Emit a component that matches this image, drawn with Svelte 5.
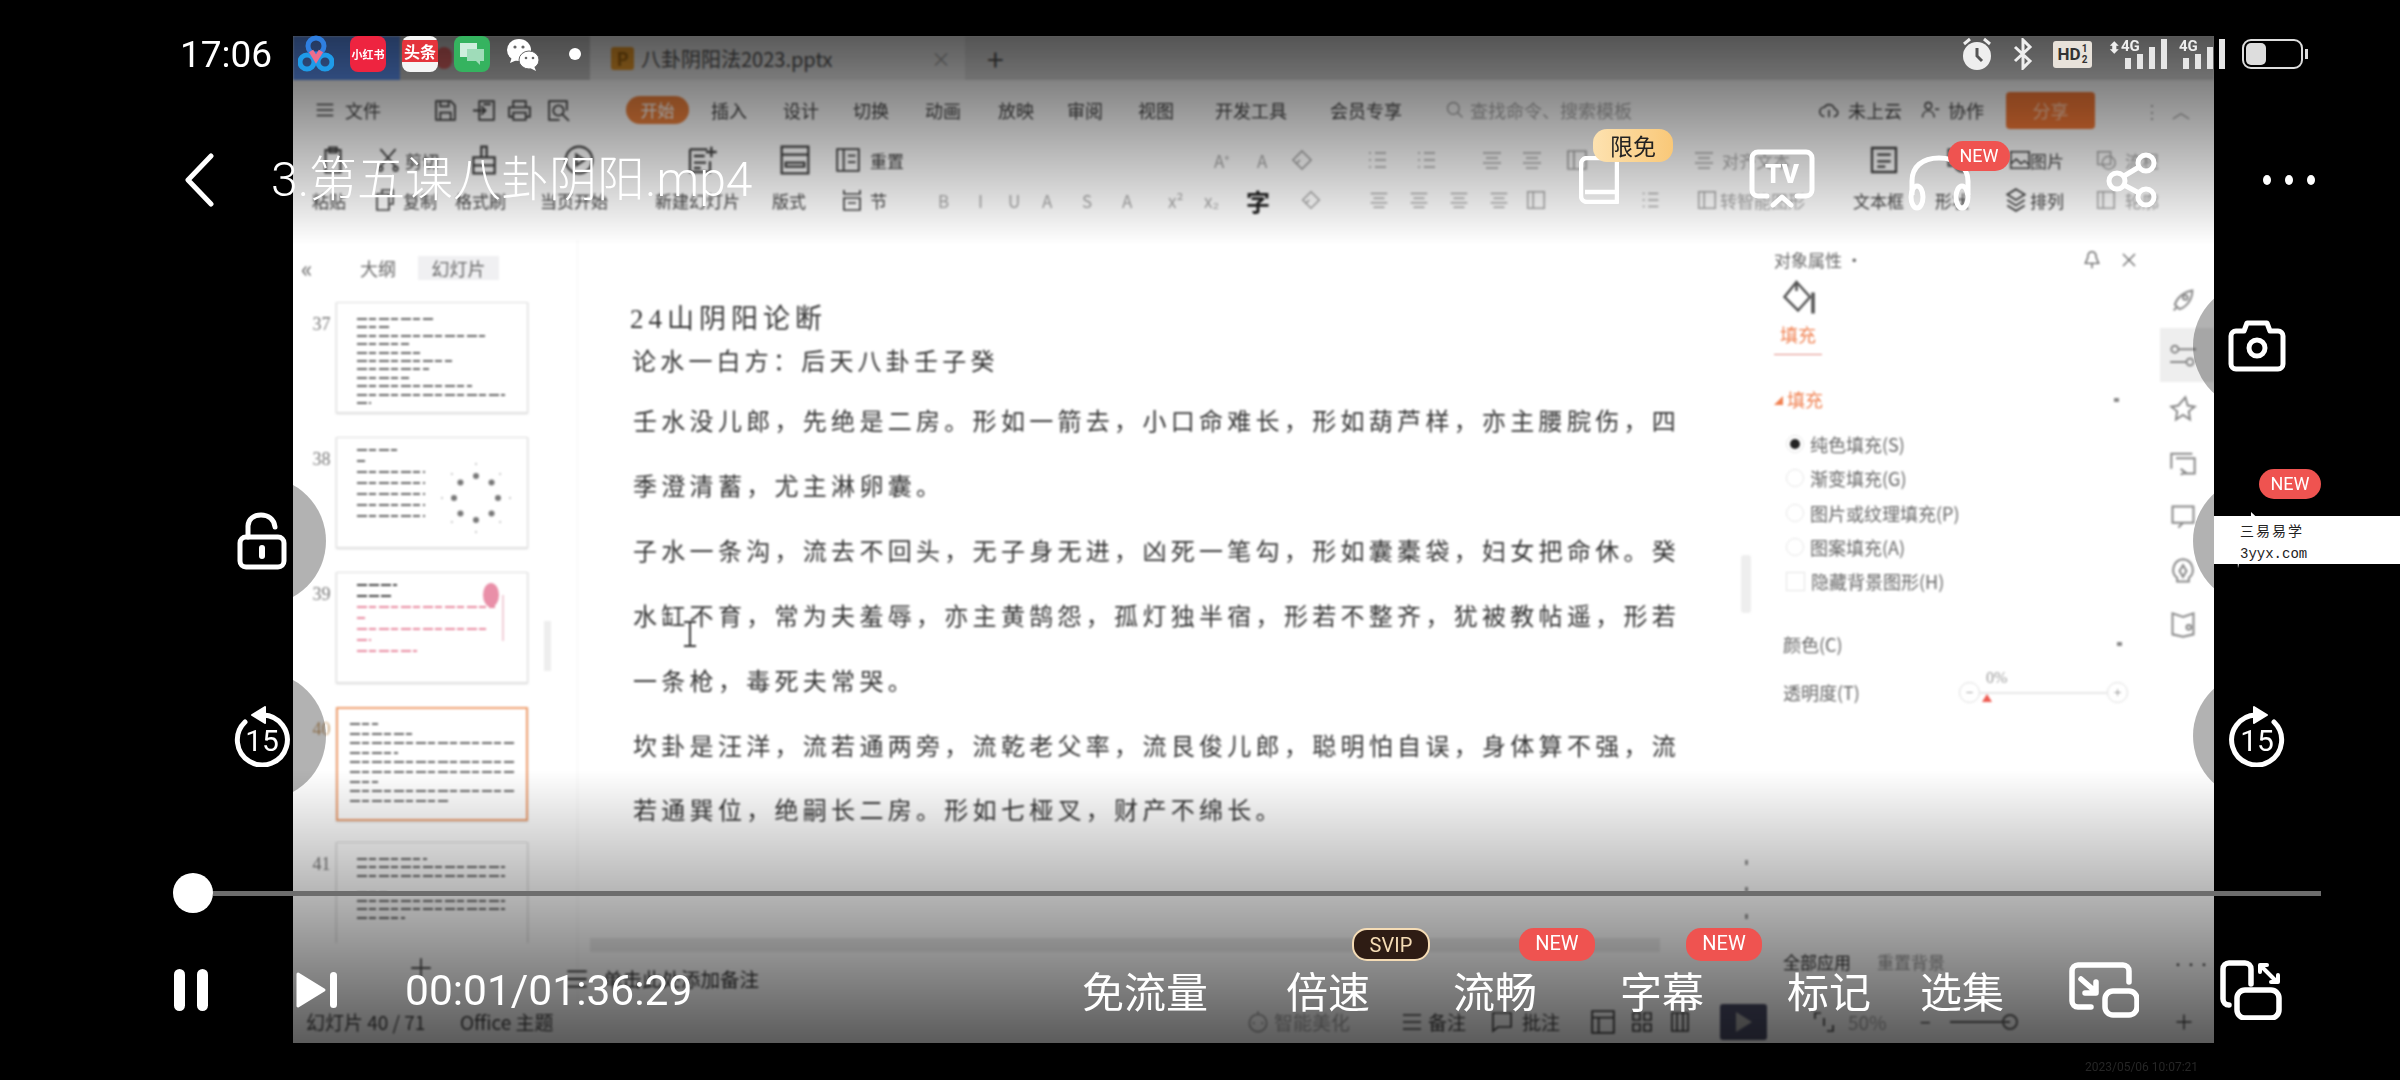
<script>
  const place = (items, end) => items.map((it, i) => ({ ...it, w: (items[i + 1] ? items[i + 1].x : end) - it.x }));

  const ICONS = {
    menu: '<path d="M3 6h18M3 12h18M3 18h18"/>',
    save: '<path d="M3 3h14l4 4v14H3zM7 21v-7h10v7M7 3v5h8V3"/>',
    import: '<path d="M7 3h14v18H7zM1 12h12M9 8l4 4-4 4M11 6h7"/>',
    print: '<path d="M6 9V3h12v6M6 18H2V9h20v9h-4M6 14h12v7H6z"/>',
    preview: '<path d="M20 12V3H3v18h10"/><circle cx="12" cy="12" r="5"/><path d="M16 16l6 6"/>',
    clip: '<path d="M6 4h12v18H6zM9 2h6v4H9z"/>',
    scissors: '<path d="M5 2l14 16M19 2L5 18"/><circle cx="5" cy="20" r="2"/><circle cx="19" cy="20" r="2"/>',
    brush: '<path d="M10 2h4v8h-4zM4 10h16v12H4zM4 16h16"/>',
    play: '<circle cx="12" cy="12" r="10"/><path d="M10 8l6 4-6 4z"/>',
    newslide: '<path d="M3 4h13M3 4v17h15v-8M6 9h8M6 14h9M6 18h5M19 2v8M15 6h8"/>',
    layout: '<path d="M2 2h20v20H2zM2 8h20M5 14h14v3H5z"/>',
    reset: '<path d="M2 2h20v20H2zM8 2v20M12 8h7M12 14h7"/>',
    copy: '<path d="M4 6h12v16H4zM9 6V2h11v14h-4"/>',
    section: '<path d="M4 2v4h16V2M4 10v12h16V10zM8 15h8"/>',
    list: '<path d="M3 5h2M3 12h2M3 19h2M9 5h11M9 12h11M9 19h11"/>',
    align: '<path d="M3 5h18M6 10h12M3 15h18M6 20h12"/>',
    eraser: '<path d="M12 3l9 9-9 9-9-9z"/><path d="M6 16l4-4"/>',
    box: '<path d="M3 3h18v18H3zM9 3v18"/>',
    text: '<path d="M3 3h18v18H3z"/><path d="M7 8h10M7 13h10M7 17h6"/>',
    shape: '<path d="M3 3h14v14H3z"/><circle cx="15" cy="15" r="7"/>',
    image: '<path d="M2 3h20v18H2zM2 16l6-5 5 5 4-3 5 4"/>',
    arrange: '<path d="M12 2l8 5-8 5-8-5zM4 12l8 5 8-5M4 17l8 5 8-5"/>',
    cloud: '<path d="M7 19a5 5 0 0 1 0-10 6 6 0 0 1 11 2 4 4 0 0 1-1 8"/><path d="M12 12v8"/>',
    person: '<circle cx="10" cy="7" r="4"/><path d="M3 21c0-5 3-8 7-8s7 3 7 8M18 11h5"/>',
    search: '<circle cx="10" cy="10" r="7"/><path d="M15 15l6 6"/>',
    robot: '<circle cx="12" cy="13" r="8"/><path d="M12 2v3M8 12v2M16 12v2"/>',
    notes: '<path d="M3 5h18M3 12h18M3 19h18"/>',
    comment: '<path d="M3 3h18v14H8l-5 4z"/>',
    normal: '<path d="M2 2h20v20H2zM2 8h20M8 8v14"/>',
    sorter: '<path d="M3 3h7v7H3zM14 3h7v7h-7zM3 14h7v7H3zM14 14h7v7h-7z"/>',
    read: '<path d="M4 3h16v18H4zM9 3v18M15 3v18"/>',
    fit: '<path d="M3 9V3h6M21 15v6h-6M12 8v8"/>',
    fill: '<path d="M11 2l9 10-8 9-9-9zM11 2v6"/><path d="M22 9v14" stroke-width="2.4"/>',
    pin: '<path d="M12 2c4 0 5 3 5 7l3 7H4l3-7c0-4 1-7 5-7zM12 16v6"/>',
    close: '<path d="M4 4l16 16M20 4L4 20"/>',
    rocket: '<path d="M20 3c0 8-5 14-11 16l-4-4C7 9 13 4 20 3z"/><circle cx="14" cy="9" r="2"/><path d="M4 20l3-3"/>',
    sliders: '<circle cx="5" cy="7" r="3"/><path d="M8 7h15M1 18h14"/><circle cx="18" cy="18" r="3"/>',
    star: '<path d="M14 2l2 7 6 1-5 4 1 7-6-4-6 4 1-7-5-4 6-1z"/>',
    turn: '<path d="M2 17V4h18M6 8h16v13H12M10 17l4 3-4 2"/>',
    chat: '<path d="M3 3h18v14H3zM8 21l4-4"/>',
    bulb: '<path d="M12 2a9 9 0 0 1 5 16v3H7v-3A9 9 0 0 1 12 2z"/><path d="M12 7l-3 5 3 5 3-5z"/>',
    booklet: '<path d="M12 5L3 2v18l9 2 9-2V2z"/><circle cx="17" cy="14" r="2"/>',
    plus: '<path d="M12 3v18M3 12h18"/>'
  };

  const menu = place([
    { x: 293 }, { x: 314, i: 'menu', s: 22 }, { x: 345, t: '文件' }, { x: 433, i: 'save', s: 25 }, { x: 472, i: 'import', s: 25 },
    { x: 507, i: 'print', s: 25 }, { x: 546, i: 'preview', s: 25 }, { x: 626, pill: '开始' }, { x: 711, t: '插入' }, { x: 783, t: '设计' },
    { x: 853, t: '切换' }, { x: 925, t: '动画' }, { x: 998, t: '放映' }, { x: 1067, t: '审阅' }, { x: 1138, t: '视图' },
    { x: 1215, t: '开发工具' }, { x: 1330, t: '会员专享' }, { x: 1445, i: 'search', s: 20, m: 1 }, { x: 1470, t: '查找命令、搜索模板', m: 1 },
    { x: 1818, i: 'cloud', s: 22 }, { x: 1848, t: '未上云' }, { x: 1920, i: 'person', s: 20 }, { x: 1948, t: '协作' },
    { x: 2006, share: '分享' }, { x: 2143, t: '⋮', m: 1 }, { x: 2172, t: '︿', m: 1 }
  ], 2214);

  const ribbonTop = place([
    { x: 293 }, { x: 318, i: 'clip', s: 30 }, { x: 375, i: 'scissors', s: 26 }, { x: 405, t: '剪切' }, { x: 468, i: 'brush', s: 32 },
    { x: 563, i: 'play', s: 32 }, { x: 686, i: 'newslide', s: 32 }, { x: 779, i: 'layout', s: 32 }, { x: 835, i: 'reset', s: 26 }, { x: 870, t: '重置' },
    { x: 1214, t: 'A⁺', m: 1 }, { x: 1257, t: 'A', m: 1 }, { x: 1290, i: 'eraser', s: 24, m: 1 }, { x: 1366, i: 'list', s: 24, m: 1 }, { x: 1415, i: 'list', s: 24, m: 1 },
    { x: 1480, i: 'align', s: 24, m: 1 }, { x: 1520, i: 'align', s: 24, m: 1 }, { x: 1565, i: 'box', s: 24, m: 1 }, { x: 1692, i: 'align', s: 24, m: 1 },
    { x: 1722, t: '对齐文本', m: 1 }, { x: 1868, i: 'text', s: 32 }, { x: 1945, i: 'shape', s: 28 }, { x: 2009, i: 'image', s: 22 }, { x: 2030, t: '图片' },
    { x: 2095, i: 'shape', s: 22, m: 1 }, { x: 2125, t: '流程', m: 1 }
  ], 2214);

  const ribbonBottom = place([
    { x: 293 }, { x: 312, t: '粘贴' }, { x: 373, i: 'copy', s: 24 }, { x: 403, t: '复制' }, { x: 455, t: '格式刷' }, { x: 540, t: '当页开始' },
    { x: 655, t: '新建幻灯片' }, { x: 772, t: '版式' }, { x: 840, i: 'section', s: 24 }, { x: 870, t: '节' },
    { x: 938, t: 'B', m: 1 }, { x: 978, t: 'I', m: 1 }, { x: 1008, t: 'U', m: 1 }, { x: 1042, t: 'A', m: 1 }, { x: 1082, t: 'S', m: 1 }, { x: 1122, t: 'A', m: 1 },
    { x: 1168, t: 'x²', m: 1 }, { x: 1204, t: 'x₂', m: 1 }, { x: 1246, t: '字', d: 1 }, { x: 1300, i: 'eraser', s: 22, m: 1 },
    { x: 1368, i: 'align', s: 22, m: 1 }, { x: 1408, i: 'align', s: 22, m: 1 }, { x: 1448, i: 'align', s: 22, m: 1 }, { x: 1488, i: 'align', s: 22, m: 1 }, { x: 1525, i: 'box', s: 22, m: 1 },
    { x: 1640, i: 'list', s: 22, m: 1 }, { x: 1696, i: 'box', s: 22, m: 1 }, { x: 1720, t: '转智能图形', m: 1 }, { x: 1853, t: '文本框' }, { x: 1935, t: '形状' },
    { x: 2003, i: 'arrange', s: 26 }, { x: 2030, t: '排列' }, { x: 2095, i: 'box', s: 22, m: 1 }, { x: 2125, t: '轮廓', m: 1 }
  ], 2214);

  const footer = place([
    { x: 293 }, { x: 306, t: '幻灯片 40 / 71' }, { x: 460, t: 'Office 主题' }, { x: 1245, i: 'robot', s: 26, m: 1 }, { x: 1274, t: '智能美化', m: 1 }, { x: 1400, i: 'notes', s: 24 },
    { x: 1428, t: '备注' }, { x: 1490, i: 'comment', s: 24 }, { x: 1522, t: '批注' }, { x: 1590, i: 'normal', s: 26 }, { x: 1630, i: 'sorter', s: 24 },
    { x: 1668, i: 'read', s: 24 }, { x: 1720, playBtn: 1 }, { x: 1812, i: 'fit', s: 24 }, { x: 1848, t: '50%', m: 1 }, { x: 1920, t: '−' }, { x: 1950, zoomBar: 1 },
    { x: 2174, i: 'plus', s: 20 }
  ], 2214);

  const lines = [
    '壬水没儿郎，先绝是二房。形如一箭去，小口命难长，形如葫芦样，亦主腰脘伤，四',
    '季澄清蓄，尤主淋卵囊。',
    '子水一条沟，流去不回头，无子身无进，凶死一笔勾，形如囊橐袋，妇女把命休。癸',
    '水缸不育，常为夫羞辱，亦主黄鹄怨，孤灯独半宿，形若不整齐，犹被教帖遥，形若',
    '一条枪，毒死夫常哭。',
    '坎卦是汪洋，流若通两旁，流乾老父率，流艮俊儿郎，聪明怕自误，身体算不强，流',
    '若通巽位，绝嗣长二房。形如七桠叉，财产不绵长。'
  ];

  const slides = [
    { n: 37, cls: 'plain', lines: [78, 33, 128, 52, 65, 95, 72, 52, 115, 148, 14] },
    { n: 38, cls: 'wheel', lines: [40, 8, 68, 68, 68, 68, 68] },
    { n: 39, cls: 'pink', lines: [40, 36, 138, 8, 132, 14, 60] },
    { n: 40, cls: 'active', lines: [28, 62, 166, 48, 166, 166, 28, 166, 100] },
    { n: 41, cls: 'plain wide', lines: [70, 148, 148, 0, 30, 148, 148, 48] }
  ];

  const options = [
    { t: '纯色填充(S)', on: true }, { t: '渐变填充(G)' }, { t: '图片或纹理填充(P)' }, { t: '图案填充(A)' }
  ];

  const rail = ['rocket', 'sliders', 'star', 'turn', 'chat', 'bulb', 'booklet'];
  const wheel = [0, 45, 90, 135, 180, 225, 270, 315];
</script>

{#snippet ic(name, size)}
  <svg class="ic" width={size} height={size} viewBox="0 0 24 24">{@html ICONS[name]}</svg>
{/snippet}

{#snippet cells(items)}
  {#each items as it}
    <div class="cell" class:muted={it.m} class:dark={it.d} style="width:{it.w}px">
      {#if it.i}{@render ic(it.i, it.s)}{/if}
      {#if it.t}<span>{it.t}</span>{/if}
      {#if it.pill}<span class="pill">{it.pill}</span>{/if}
      {#if it.share}<span class="sharebtn">{it.share}</span>{/if}
      {#if it.playBtn}<span class="playbtn"><i></i></span>{/if}
      {#if it.zoomBar}<span class="zoombar"><i></i></span>{/if}
    </div>
  {/each}
{/snippet}

{#snippet replay()}
  <svg width="56" height="62" viewBox="0 0 56 62">
    <path d="M27 10 A25 25 0 1 0 45 17" fill="none" stroke="#fff" stroke-width="5" stroke-linecap="round" />
    <path d="M25 2 L38 10 L25 18 Z" fill="#fff" stroke="#fff" stroke-width="2" stroke-linejoin="round" />
    <text x="28" y="46" text-anchor="middle" class="num15">15</text>
  </svg>
{/snippet}

<div class="screen">
  <main class="video">
    <div class="app">
      <header class="tabs">
        <div class="tab-home"></div>
        <div class="tab-other"><i></i></div>
        <div class="tab-active">
          <b class="ppt">P</b>
          <span>八卦阴阳法2023.pptx</span>
          <em>×</em>
        </div>
        <span class="tab-add">+</span>
      </header>
      <nav class="row menu">{@render cells(menu)}</nav>
      <section class="ribbon">
        <div class="row rib">{@render cells(ribbonTop)}</div>
        <div class="row rib">{@render cells(ribbonBottom)}</div>
      </section>

      <div class="workspace">
        <aside class="outline">
          <div class="out-head">
            <span class="collapse">«</span>
            <span class="out-tab">大纲</span>
            <span class="out-tab on">幻灯片</span>
          </div>
          <div class="thumbs">
            {#each slides as s}
              <div class="thumb-row">
                <span class="num" class:cur={s.n === 40}>{s.n}</span>
                <div class="thumb {s.cls}">
                  {#each s.lines as w}
                    <div class="tl" style="width:{w}px"></div>
                  {/each}
                  {#if s.cls === 'wheel'}
                    <svg class="wheel-art" width="80" height="80" viewBox="-40 -40 80 80">
                      {#each wheel as a}
                        <circle cx={Math.cos(a * Math.PI / 180) * 22} cy={Math.sin(a * Math.PI / 180) * 22} r="3" fill="#777" />
                        <circle cx={Math.cos(a * Math.PI / 180) * 34} cy={Math.sin(a * Math.PI / 180) * 34} r="1" fill="#bbb" />
                      {/each}
                    </svg>
                  {/if}
                  {#if s.cls === 'pink'}
                    <svg class="balloon" width="32" height="60" viewBox="0 0 32 60">
                      <ellipse cx="10" cy="14" rx="8" ry="12" fill="#e98fa8" />
                      <path d="M22 14v46" stroke="#eebfca" stroke-width="1.5" />
                    </svg>
                  {/if}
                </div>
              </div>
            {/each}
          </div>
          <div class="add-slide">{@render ic('plus', 26)}</div>
          <span class="out-scroll"></span>
        </aside>

        <section class="center">
          <article class="slide">
            <h1>24山阴阳论断</h1>
            <h2>论水一白方：后天八卦壬子癸</h2>
            {#each lines as l}<p>{l}</p>{/each}
            <svg class="cursor" width="14" height="26" viewBox="0 0 14 26"><path d="M1 1h12M7 1v24M1 25h12" fill="none" stroke="#333" stroke-width="2" /></svg>
          </article>
          <div class="notes">
            <div class="note-bar"></div>
            <div class="note-text">{@render ic('notes', 26)}<span>单击此处添加备注</span></div>
          </div>
          <span class="main-scroll"></span>
          <span class="vdots"><i></i><i></i><i></i></span>
        </section>

        <section class="props">
          <div class="p-head">
            <span>对象属性 ·</span>
            <span class="p-actions">{@render ic('pin', 20)}{@render ic('close', 18)}</span>
          </div>
          <div class="p-fill">{@render ic('fill', 36)}</div>
          <div class="p-tab"><span>填充</span></div>
          <div class="p-sec"><span><small>◢</small> 填充</span><i></i></div>
          <ul class="opts">
            {#each options as o}
              <li><span class="radio" class:on={o.on}></span>{o.t}</li>
            {/each}
            <li><span class="check"></span>隐藏背景图形(H)</li>
          </ul>
          <div class="p-color"><span>颜色(C)</span><i></i></div>
          <div class="p-alpha">
            <span class="a-label">透明度(T)</span>
            <span class="round">−</span>
            <span class="a-track"><em>0%</em><b></b></span>
            <span class="round">+</span>
          </div>
          <div class="p-foot"><span>全部应用</span><span class="light">重置背景</span></div>
        </section>

        <aside class="rail">
          {#each rail as r, i}
            <div class="rail-item" class:sel={i === 1}>{@render ic(r, 28)}</div>
          {/each}
          <div class="rail-more">•••</div>
        </aside>
      </div>

      <footer class="row foot">{@render cells(footer)}</footer>
    </div>
    <div class="shade top"></div>
    <div class="shade bottom"></div>
  </main>

  <div class="player">
    <div class="status">
      <span class="clock">17:06</span>
      <div class="notifs">
        <svg width="36" height="38" viewBox="0 0 36 38" fill="none" stroke-width="5">
          <circle cx="9" cy="27" r="7" stroke="#1f9be8" /><circle cx="27" cy="27" r="7" stroke="#1f9be8" />
          <circle cx="18" cy="11" r="8" stroke="#2f7fe0" /><path d="M13 16l5 8 5-8" stroke="#ec6d8c" />
        </svg>
        <span class="xhs">小红书</span>
        <span class="tt"><b>头条</b></span>
        <span class="msg">
          <svg width="30" height="28" viewBox="0 0 30 28"><path d="M3 3h17v14H3z" fill="#cfeedd" /><path d="M10 9h17v12h-4v4l-4-4h-9z" fill="#9fdcb9" /></svg>
        </span>
        <svg width="34" height="34" viewBox="0 0 34 34" fill="#fff">
          <ellipse cx="13" cy="13" rx="12" ry="11" /><path d="M6 20l-2 6 7-3z" />
          <ellipse cx="23" cy="23" rx="10" ry="9" stroke="#666" stroke-width="1" /><path d="M28 29l2 5-6-3z" />
          <circle cx="9" cy="10" r="1.6" fill="#666" /><circle cx="17" cy="10" r="1.6" fill="#666" />
          <circle cx="20" cy="21" r="1.3" fill="#666" /><circle cx="27" cy="21" r="1.3" fill="#666" />
        </svg>
        <span class="ndot"></span>
      </div>
      <div class="sys">
        <svg width="34" height="34" viewBox="0 0 34 34">
          <circle cx="17" cy="19" r="14" fill="#eee" /><path d="M17 11v8l5 5" fill="none" stroke="#555" stroke-width="3" />
          <path d="M4 7l6-5M30 7l-6-5" stroke="#eee" stroke-width="3" />
        </svg>
        <svg class="bt" width="20" height="32" viewBox="0 0 20 32"><path d="M2 9l15 14-7 7V2l7 7L2 23" fill="none" stroke="#eee" stroke-width="3" /></svg>
        <span class="hd"><b>HD</b><small><i>1</i><i>2</i></small></span>
        <span class="sig first"><em>⬍</em><u>4G</u><i class="b1"></i><i class="b2"></i><i class="b3"></i><i class="b4"></i></span>
        <span class="sig"><u>4G</u><i class="b1"></i><i class="b2"></i><i class="b3"></i><i class="b4"></i></span>
        <span class="batt"><i></i></span>
      </div>
    </div>

    <div class="titlebar">
      <svg class="back" width="30" height="54" viewBox="0 0 30 54"><path d="M27 3L4 27l23 24" fill="none" stroke="#fff" stroke-width="5" stroke-linecap="round" stroke-linejoin="round" /></svg>
      <h3>3.第五课八卦阴阳.mp4</h3>
      <div class="tools">
        <span class="tool book">
          <svg width="40" height="48" viewBox="0 0 40 48" fill="none" stroke="#fff" stroke-width="4.5" stroke-linejoin="round"><path d="M8 2h30v44H8a6 6 0 0 1-6-6V8a6 6 0 0 1 6-6z" /><path d="M6 36h32" /></svg>
          <b class="free">限免</b>
        </span>
        <span class="tool tv">
          <svg width="66" height="60" viewBox="0 0 66 60" fill="none" stroke="#fff" stroke-width="5" stroke-linecap="round" stroke-linejoin="round">
            <path d="M18 47H9a6 6 0 0 1-6-6V9a6 6 0 0 1 6-6h48a6 6 0 0 1 6 6v32a6 6 0 0 1-6 6h-9" />
            <path d="M24 56l9-8 9 8" />
            <text x="33" y="34" text-anchor="middle" class="tvtxt">TV</text>
          </svg>
        </span>
        <span class="tool head">
          <svg width="64" height="56" viewBox="0 0 64 56" fill="none" stroke="#fff" stroke-width="5">
            <path d="M4 40V26C4 12 14 3 31 3s29 9 29 23v14" />
            <ellipse cx="9" cy="42" rx="6" ry="11" /><ellipse cx="54" cy="42" rx="6" ry="11" />
          </svg>
          <b class="new">NEW</b>
        </span>
        <span class="tool share">
          <svg width="52" height="56" viewBox="0 0 52 56" fill="none" stroke="#fff" stroke-width="5">
            <circle cx="40" cy="11" r="8" /><circle cx="11" cy="29" r="8" /><circle cx="40" cy="45" r="8" />
            <path d="M18 24l15-9M18 33l15 8" />
          </svg>
        </span>
        <span class="more"><i></i><i></i><i></i></span>
      </div>
    </div>

    <div class="middle">
      <div class="side">
        <button class="round-btn" aria-label="锁定">
          <svg width="50" height="58" viewBox="0 0 50 58" fill="none" stroke="#fff" stroke-width="5" stroke-linecap="round">
            <rect x="3" y="25" width="44" height="30" rx="6" />
            <path d="M11 25V14C11 7 17 3 24 3s13 4 14 12" />
            <path d="M25 36v8" stroke-width="6" />
          </svg>
        </button>
        <button class="round-btn mirror" aria-label="后退15秒">{@render replay()}</button>
      </div>
      <div class="side">
        <button class="round-btn" aria-label="截图">
          <svg width="58" height="52" viewBox="0 0 58 52" fill="none" stroke="#fff" stroke-width="5" stroke-linejoin="round">
            <path d="M3 16a5 5 0 0 1 5-5h8l3-8h20l3 8h8a5 5 0 0 1 5 5v28a5 5 0 0 1-5 5H8a5 5 0 0 1-5-5z" /><circle cx="29" cy="28" r="8" />
          </svg>
        </button>
        <button class="round-btn" aria-label="转发">
          <svg width="44" height="62" viewBox="0 0 44 62"><path d="M16 2l26 24-26 20v-12C10 36 6 44 3 58 2 40 6 24 16 18z" fill="#fff" /></svg>
          <b class="new side-new">NEW</b>
        </button>
        <button class="round-btn" aria-label="前进15秒">{@render replay()}</button>
      </div>
    </div>

    <div class="progress">
      <span class="knob"></span>
      <span class="track"></span>
    </div>

    <div class="controls">
      <span class="pause"><i></i><i></i></span>
      <svg class="next" width="42" height="38" viewBox="0 0 42 38"><path d="M2 3l26 16L2 35z" fill="#fff" stroke="#fff" stroke-width="3" stroke-linejoin="round" /><rect x="34" y="1" width="7" height="36" rx="3.5" fill="#fff" /></svg>
      <span class="time">00:01/01:36:29</span>
      <div class="options">
        <span class="opt first">免流量</span>
        <span class="opt">倍速<b class="svip">SVIP</b></span>
        <span class="opt">流畅<b class="new opt-new">NEW</b></span>
        <span class="opt">字幕<b class="new opt-new">NEW</b></span>
        <span class="opt">标记</span>
        <span class="opt last">选集</span>
      </div>
      <svg class="pip" width="70" height="56" viewBox="0 0 70 56" fill="none" stroke="#fff" stroke-width="5.5" stroke-linecap="round" stroke-linejoin="round">
        <path d="M60 20V9a6 6 0 0 0-6-6H9a6 6 0 0 0-6 6v30a6 6 0 0 0 6 6h13" />
        <rect x="36" y="29" width="32" height="24" rx="8" />
        <path d="M12 17l15 13M16 31h11V20" />
      </svg>
      <svg class="rot" width="62" height="60" viewBox="0 0 62 60" fill="none" stroke="#fff" stroke-width="5.5" stroke-linecap="round" stroke-linejoin="round">
        <path d="M31 24V9a6 6 0 0 0-6-6H9a6 6 0 0 0-6 6v30a6 6 0 0 0 6 6" />
        <rect x="17" y="30" width="42" height="28" rx="8" />
        <path d="M42 7l14 14" stroke-width="4" /><path d="M40 12V5h7M51 22h7v-7" stroke-width="4" />
      </svg>
    </div>
  </div>

  <div class="mark">三易易学<br /><span>3yyx.com</span></div>
  <div class="stamp">2023/05/06 10:07:21</div>
</div>

<style>
  :global(body) { margin: 0; background: #000; }
  .screen {
    position: relative;
    width: 2400px;
    height: 1080px;
    box-sizing: border-box;
    padding: 36px 186px 37px 293px;
    background: #000;
    overflow: hidden;
    display: flex;
    font-family: Roboto, "Noto Sans CJK SC", sans-serif;
  }
  .video { position: relative; flex: 1; background: #fff; overflow: hidden; }
  .app {
    height: 100%;
    display: flex;
    flex-direction: column;
    filter: blur(0.8px);
    color: #444;
    font-family: "Noto Sans CJK SC", sans-serif;
    font-size: 18px;
  }
  .shade { position: absolute; left: 0; right: 0; pointer-events: none; }
  .shade.top { top: 0; height: 209px; background: linear-gradient(rgba(0,0,0,.62), rgba(0,0,0,0)); }
  .shade.bottom { bottom: 0; height: 273px; background: linear-gradient(rgba(0,0,0,0), rgba(0,0,0,.64)); }

  .tabs { height: 44px; display: flex; align-items: stretch; background: #dedede; flex: none; }
  .tab-home { width: 107px; background: #5f94f5; }
  .tab-other { width: 190px; background: #c8c8c8; display: flex; align-items: center; }
  .tab-other i { width: 16px; height: 22px; margin-left: 36px; border-radius: 8px; background: #d66; }
  .tab-active { width: 375px; background: #f0f0f0; display: flex; align-items: center; font-size: 20px; color: #555; }
  .ppt { width: 23px; height: 23px; margin-left: 21px; margin-right: 7px; border-radius: 3px; background: #f0a030; color: #a86a10; font-size: 18px; text-align: center; line-height: 23px; }
  .tab-active em { margin-left: auto; margin-right: 14px; font-style: normal; color: #aaa; }
  .tab-add { margin-left: 22px; font-size: 30px; color: #555; line-height: 44px; }

  .row { display: flex; align-items: center; flex: none; }
  .menu { height: 60px; }
  .ribbon { height: 100px; flex: none; }
  .rib { height: 40px; font-size: 17px; }
  .cell { flex: none; display: flex; align-items: center; white-space: nowrap; height: 100%; }
  .cell.muted { color: #aaa; }
  .cell.dark { color: #222; font-weight: 700; font-size: 24px; }
  .ic { flex: none; fill: none; stroke: currentColor; stroke-width: 1.7; }
  .pill { width: 63px; height: 28px; border-radius: 14px; background: #f0843f; color: #fff; font-size: 17px; text-align: center; line-height: 28px; }
  .sharebtn { width: 89px; height: 37px; border-radius: 4px; background: #f47a38; color: #ffc9a8; text-align: center; line-height: 37px; }
  .playbtn { width: 47px; height: 36px; background: #4a4c66; border-radius: 3px; display: flex; align-items: center; justify-content: center; }
  .playbtn i { border-left: 16px solid #aaa; border-top: 10px solid transparent; border-bottom: 10px solid transparent; }
  .zoombar { width: 60px; height: 2px; background: #666; position: relative; }
  .zoombar i { position: absolute; right: -8px; top: -7px; width: 12px; height: 12px; border: 2px solid #666; border-radius: 50%; }

  .workspace { flex: 1; min-height: 0; display: flex; }
  .outline { position: relative; width: 285px; flex: none; display: flex; flex-direction: column; border-right: 1px solid #f6f6f6; box-sizing: border-box; }
  .out-head { height: 24px; margin-top: 16px; display: flex; align-items: center; font-size: 18px; color: #666; }
  .collapse { margin-left: 8px; width: 55px; font-size: 24px; line-height: 24px; }
  .out-tab { width: 44px; text-align: center; margin-right: 8px; }
  .out-tab.on { width: 81px; margin-left: 10px; background: #f0f0f2; line-height: 24px; }
  .thumbs { margin-top: 22px; height: 641px; overflow: hidden; flex: none; }
  .thumb-row { display: flex; margin-bottom: 24px; }
  .num { width: 43px; box-sizing: border-box; padding: 12px 0 0 14px; text-align: center; font-size: 18px; color: #777; font-family: "Liberation Serif", serif; }
  .num.cur { color: #c9a070; }
  .thumb {
    position: relative; width: 192px; height: 111px; box-sizing: border-box; flex: none;
    border: 1px solid #ddd; background: #fff; padding: 15px 0 0 20px;
    display: flex; flex-direction: column; gap: 6.4px;
    box-shadow: 0 1px 2px rgba(0,0,0,.15);
  }
  .tl { height: 2px; flex: none; background: repeating-linear-gradient(90deg, #666 0 10px, transparent 10px 12px, #666 12px 19px, transparent 19px 22px); }
  .wheel { gap: 9px; padding-top: 11px; }
  .wheel-art { position: absolute; left: 99px; top: 20px; }
  .pink { gap: 9px; padding-top: 11px; }
  .pink .tl { background: repeating-linear-gradient(90deg, #e88aa0 0 10px, transparent 10px 12px, #e88aa0 12px 19px, transparent 19px 22px); }
  .pink .tl:nth-child(-n+2) { background: repeating-linear-gradient(90deg, #444 0 10px, transparent 10px 12px); }
  .balloon { position: absolute; right: 14px; top: 8px; }
  .active { height: 114px; margin-bottom: -3px; border: 2px solid #f0a070; padding: 14px 0 0 12px; gap: 7.6px; }
  .add-slide { margin: 12px 0 0 115px; color: #555; }
  .out-scroll { position: absolute; left: 251px; top: 381px; width: 7px; height: 50px; background: #eee; }

  .center { position: relative; flex: 1; min-width: 0; display: flex; flex-direction: column; }
  .slide { flex: 1; padding: 57px 0 0 52px; font-family: "Noto Sans CJK SC", sans-serif; color: #333; position: relative; }
  h1, h2, h3 { margin: 0; font-weight: 400; }
  .slide h1 { font-size: 27px; line-height: 44px; letter-spacing: 5px; font-family: "Liberation Serif", "Noto Sans CJK SC", serif; }
  .slide h2 { font-size: 24px; line-height: 44px; letter-spacing: 4.2px; margin: -3px 0 0 2px; }
  .slide p { margin: 0 0 0 3px; font-size: 24px; line-height: 64.9px; letter-spacing: 4.3px; white-space: nowrap; }
  .slide h2 + p { margin-top: 6px; }
  .cursor { position: absolute; left: 105px; top: 381px; }
  .notes { height: 70px; flex: none; }
  .note-bar { height: 14px; margin: 8px 100px 0 12px; background: rgba(0,0,0,.07); }
  .note-text { margin: 12px 0 0 -14px; display: flex; align-items: center; gap: 13px; font-size: 19.5px; color: #333; }
  .main-scroll { position: absolute; right: 9px; top: 315px; width: 10px; height: 58px; background: #eee; border-radius: 3px; }
  .vdots { position: absolute; right: 12px; top: 620px; display: flex; flex-direction: column; gap: 22px; }
  .vdots i { width: 3px; height: 5px; background: #999; }

  .props { width: 400px; flex: none; padding: 8px 0 0 14px; box-sizing: border-box; display: flex; flex-direction: column; color: #666; font-size: 18px; line-height: 24px; }
  .p-head { display: flex; justify-content: space-between; padding-right: 22px; font-size: 17px; }
  .p-actions { display: flex; gap: 18px; align-items: center; }
  .p-fill { height: 40px; margin: 5px 0 5px 6px; display: flex; align-items: center; color: #555; }
  .p-tab span { display: inline-block; width: 48px; text-align: center; color: #f08050; padding-bottom: 8px; border-bottom: 1px solid #e08a80; }
  .p-sec { margin-top: 32px; display: flex; justify-content: space-between; color: #f08050; align-items: center; padding-right: 41px; }
  .p-sec small, .p-sec span { white-space: nowrap; }
  .p-sec small { font-size: 9px; vertical-align: 3px; }
  .p-sec i, .p-color i { width: 5px; height: 4px; background: #888; }
  .opts { list-style: none; padding: 0; margin: 14px 0 0; }
  .opts li { height: 34.3px; display: flex; align-items: center; padding-left: 12px; gap: 6px; }
  .radio { width: 18px; height: 18px; border: 1.5px solid #e6e6e6; border-radius: 50%; box-sizing: border-box; display: flex; align-items: center; justify-content: center; }
  .radio.on::after { content: ""; width: 10px; height: 10px; background: #222; border-radius: 50%; }
  .check { width: 19px; height: 19px; border: 1.5px solid #e4e4e4; box-sizing: border-box; }
  .p-color { margin: 34px 0 0 9px; display: flex; justify-content: space-between; align-items: center; padding-right: 38px; }
  .p-alpha { margin: 24px 0 0 9px; display: flex; align-items: center; }
  .a-label { width: 176px; }
  .round { width: 21px; height: 21px; border: 1px solid #ddd; border-radius: 50%; box-sizing: border-box; font-size: 13px; line-height: 18px; text-align: center; color: #999; }
  .a-track { position: relative; width: 127px; height: 2px; margin-top: 1px; background: #e8e8e8; }
  .a-track em { position: absolute; left: 6px; top: -26px; font-style: normal; font-size: 16px; color: #999; font-family: "Liberation Serif", serif; }
  .a-track b { position: absolute; left: 2px; top: 2px; border-left: 5px solid transparent; border-right: 5px solid transparent; border-bottom: 8px solid #ee5a50; }
  .p-foot { margin-top: auto; padding: 0 0 26px 9px; display: flex; gap: 26px; color: #333; font-size: 17px; }
  .light { color: #999; }

  .rail { width: 54px; flex: none; padding-top: 34px; color: #888; display: flex; flex-direction: column; position: relative; height: 100%; box-sizing: border-box; }
  .rail-item { height: 54px; box-sizing: border-box; padding-right: 8px; display: flex; align-items: center; justify-content: center; }
  .rail-item.sel { background: #eee; }
  .rail-more { position: absolute; left: 12px; top: 716px; font-size: 12px; letter-spacing: 1px; color: #333; }
  .foot { height: 43px; color: #444; font-size: 19px; }

  .player { position: absolute; inset: 0; padding-bottom: 58px; box-sizing: border-box; display: flex; flex-direction: column; color: #fff; }
  .status { height: 36px; margin-top: 36px; display: flex; align-items: center; flex: none; }
  .clock { margin-left: 180px; margin-top: 1px; width: 118px; font-size: 37px; line-height: 36px; font-family: Roboto, sans-serif; }
  .notifs { display: flex; align-items: center; gap: 16px; }
  .xhs { width: 36px; height: 36px; background: #ee2440; border-radius: 8px; font: 700 11px/36px "Noto Sans CJK SC", sans-serif; text-align: center; white-space: nowrap; }
  .tt { width: 36px; height: 36px; border-radius: 8px; background: linear-gradient(#f5f5f5 0 12%, #e4343c 12% 72%, #f5f5f5 72%); font: 700 16px/30px "Noto Sans CJK SC", sans-serif; text-align: center; }
  .tt b { font-weight: 700; }
  .msg { width: 36px; height: 36px; border-radius: 8px; background: #35b35f; display: flex; align-items: center; justify-content: center; }
  .ndot { width: 12px; height: 12px; border-radius: 50%; background: #fff; margin-left: 13px; }
  .sys { margin-left: auto; margin-right: 97px; display: flex; align-items: center; }
  .bt { margin-left: 19px; }
  .hd { margin-left: 20px; width: 39px; height: 27px; background: #e8e2da; border-radius: 3px; color: #333; display: flex; align-items: center; justify-content: center; gap: 1px; font-size: 17px; line-height: 1; }
  .hd small { display: flex; flex-direction: column; font-size: 10px; line-height: 11px; font-weight: 700; }
  .hd i { font-style: normal; }
  .sig { position: relative; display: block; width: 48px; height: 30px; margin-left: 15px; color: #eee; }
  .sig.first { margin-left: 33px; }
  .sig em { position: absolute; left: -17px; top: 0; font: 700 15px/18px Roboto, sans-serif; font-style: normal; }
  .sig u { position: absolute; left: -4px; top: -2px; font: 700 15px/18px Roboto, sans-serif; text-decoration: none; }
  .sig i { position: absolute; bottom: 0; width: 6px; background: #e6e6e6; }
  .b1 { left: 0; height: 11px; }
  .b2 { left: 12px; height: 15px; }
  .b3 { left: 24px; height: 22px; }
  .b4 { left: 36px; height: 30px; }
  .batt { position: relative; width: 61px; height: 30px; box-sizing: border-box; margin-left: 11px; border: 2px solid #ddd; border-radius: 9px; display: block; }
  .batt i { position: absolute; left: 2px; top: 2px; width: 20px; height: 22px; background: #ddd; border-radius: 5px; }
  .batt::after { content: ""; position: absolute; right: -7px; top: 8px; width: 3px; height: 10px; background: #ddd; }

  .titlebar { height: 100px; margin-top: 58px; display: flex; align-items: center; flex: none; }
  .back { margin-left: 184px; }
  h3 { margin-left: 57px; font-size: 48px; line-height: 60px; font-weight: 300; font-family: Roboto, "Noto Sans CJK SC", sans-serif; white-space: nowrap; }
  .tools { flex: 1; position: relative; display: flex; align-items: center; height: 100%; }
  .tool { position: relative; display: block; }
  .book { margin-left: auto; }
  .tool svg { display: block; }
  .free { position: absolute; left: 14px; top: -27px; width: 80px; height: 33px; border-radius: 14px; background: linear-gradient(90deg, #fde2b0, #f9c878); color: #222; font: 400 23px/33px "Noto Sans CJK SC", sans-serif; text-align: center; }
  .tv { margin-left: 130px; margin-top: -3px; }
  .head { margin-left: 93px; margin-top: 6px; }
  .new { background: #ef5350; color: #fff; font: 400 18px/30px Roboto, sans-serif; text-align: center; border-radius: 15px; width: 62px; height: 30px; display: block; }
  .head .new { position: absolute; left: 40px; top: -14px; }
  .share { margin-left: 134px; }
  .more { margin-left: 105px; margin-right: 85px; display: flex; gap: 14px; }
  .more i { width: 8px; height: 10px; border-radius: 50%; background: #fff; }

  .middle { flex: 1; min-height: 0; display: flex; justify-content: space-between; padding: 0 79px 73px 198px; }
  .side { display: flex; flex-direction: column; justify-content: flex-end; gap: 67px; }
  .round-btn { position: relative; width: 128px; height: 128px; border-radius: 50%; border: 0; padding: 0; background: rgba(0,0,0,.3); display: flex; align-items: center; justify-content: center; }
  .mirror :global(svg) { transform: scaleX(-1); }
  .mirror :global(text) { transform: scaleX(-1); transform-origin: 28px 47px; }
  .num15 { fill: #fff; font: 400 30px Roboto, sans-serif; }
  .tvtxt { fill: #fff; stroke: none; font: 900 26px Roboto, sans-serif; }
  .side-new { position: absolute; left: 66px; top: -8px; }

  .progress { height: 40px; display: flex; align-items: center; padding: 0 79px 0 173px; flex: none; }
  .knob { width: 40px; height: 40px; border-radius: 50%; background: #fff; flex: none; }
  .track { flex: 1; height: 5px; background: #6d6d6d; }

  .controls { height: 64px; margin-top: 45px; display: flex; align-items: center; flex: none; }
  .pause { margin-left: 174px; display: flex; gap: 12px; }
  .pause i { width: 11px; height: 42px; border-radius: 6px; background: #fff; }
  .next { margin-left: 88px; }
  .time { margin-left: 67px; font-size: 42.5px; font-weight: 400; font-family: Roboto, sans-serif; }
  .options { margin-left: auto; display: flex; gap: 83px; font: 400 42px/60px "Noto Sans CJK SC", sans-serif; }
  .opt { position: relative; white-space: nowrap; }
  .first { margin-right: -5px; }
  .last { margin-left: -34px; }
  .svip, .opt-new { position: absolute; top: -32px; left: 66px; width: 78px; height: 33px; box-sizing: border-box; border-radius: 15px; font: 400 20px/31px Roboto, sans-serif; text-align: center; }
  .svip { background: #2e1c14; border: 2px solid #f5dcb5; color: #f5dcb5; }
  .opt-new { width: 76px; }
  .pip { margin-left: 65px; }
  .rot { margin-left: 81px; margin-right: 118px; }

  .mark { position: absolute; left: 2214px; top: 516px; width: 186px; height: 48px; box-sizing: border-box; padding: 3px 0 0 26px; background: #fff; color: #222; font: 400 14px/22px "Noto Sans CJK SC", sans-serif; letter-spacing: 2px; }
  .mark span { font-family: "Liberation Mono", monospace; letter-spacing: 0; }
  .stamp { position: absolute; left: 2085px; top: 1060px; color: #262626; font: 400 12px/14px Roboto, sans-serif; }
</style>
